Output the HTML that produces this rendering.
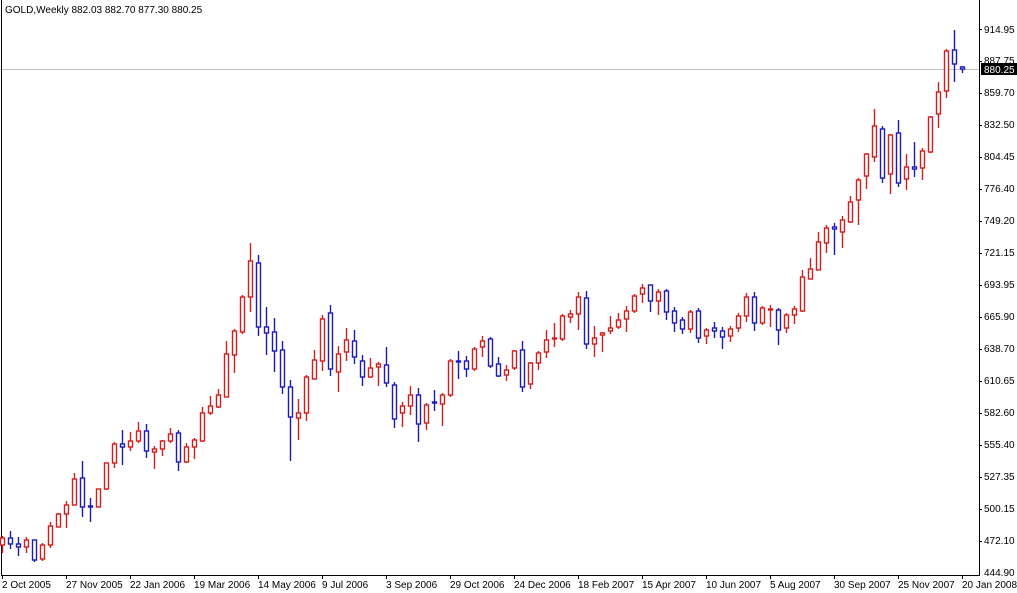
<!DOCTYPE html>
<html><head><meta charset="utf-8"><style>
html,body{margin:0;padding:0;background:#fff;width:1017px;height:593px;overflow:hidden}
svg{display:block}
text{font-family:"Liberation Sans",sans-serif;font-size:10px;fill:#000}
</style></head><body>
<svg width="1017" height="593" viewBox="0 0 1017 593" xmlns="http://www.w3.org/2000/svg">
<rect x="0" y="0" width="1017" height="593" fill="#fff"/>
<path d="M0 69.5H979" stroke="#c0c0c0" stroke-width="1"/>
<path d="M1.5 0V575.5H979.5V0" fill="none" stroke="#000" stroke-width="1"/>
<text x="5" y="13">GOLD,Weekly  882.03 882.70 877.30 880.25</text>

<g stroke="#d41c1c" stroke-width="1.4" fill="#fff">
<path d="M2.5 536V553M26.5 537V553M42.5 543V561M50.5 522V548M58.5 513V527M66.5 501V528M74.5 473V505M98.5 489V507M106.5 463V490M114.5 442V468M130.5 432V451M138.5 422V443M154.5 446V469M162.5 440V456M170.5 428V443M186.5 443V463M194.5 438V459M202.5 407V442M210.5 396V415M218.5 389V408M226.5 341V397M234.5 329V373M242.5 295V334M250.5 243V312M298.5 399V440M306.5 375V421M314.5 350V379M322.5 315V371M338.5 346V392M346.5 328V361M370.5 358V378M378.5 362V386M402.5 402V427M410.5 386V415M426.5 403V430M442.5 393V426M450.5 359V397M474.5 347V371M482.5 336V357M506.5 365V381M514.5 350V370M530.5 362V389M538.5 351V370M546.5 330V358M554.5 323V347M562.5 314V341M570.5 310V323M578.5 292V330M594.5 326V357M602.5 332V352M610.5 316V334M618.5 313V329M626.5 306V332M634.5 294V313M642.5 284V303M658.5 289V315M690.5 310V333M706.5 328V344M730.5 326V342M738.5 313V332M746.5 293V322M762.5 306V325M770.5 305V327M786.5 313V333M794.5 306V324M802.5 270V312M810.5 258V279M818.5 232V270M826.5 225V253M842.5 216V248M850.5 196V223M858.5 178V225M866.5 153V189M874.5 109V162M890.5 134V194M906.5 154V190M922.5 148V180M930.5 116V153M938.5 82V128M946.5 49V98"/>
<rect x="0.5" y="538" width="4" height="7"/><rect x="24.5" y="540" width="4" height="7"/><rect x="40.5" y="545" width="4" height="14"/><rect x="48.5" y="526" width="4" height="19"/><rect x="56.5" y="514" width="4" height="13"/><rect x="64.5" y="505" width="4" height="9"/><rect x="72.5" y="479" width="4" height="26"/><rect x="96.5" y="489" width="4" height="18"/><rect x="104.5" y="463" width="4" height="26"/><rect x="112.5" y="444" width="4" height="19"/><rect x="128.5" y="441" width="4" height="6"/><rect x="136.5" y="431" width="4" height="10"/><rect x="152.5" y="449" width="4" height="3"/><rect x="160.5" y="441" width="4" height="8"/><rect x="168.5" y="434" width="4" height="7"/><rect x="184.5" y="447" width="4" height="15"/><rect x="192.5" y="440" width="4" height="7"/><rect x="200.5" y="413" width="4" height="28"/><rect x="208.5" y="406" width="4" height="7"/><rect x="216.5" y="395" width="4" height="12"/><rect x="224.5" y="354" width="4" height="43"/><rect x="232.5" y="331" width="4" height="24"/><rect x="240.5" y="297" width="4" height="35"/><rect x="248.5" y="261" width="4" height="36"/><rect x="296.5" y="413" width="4" height="5"/><rect x="304.5" y="377" width="4" height="36"/><rect x="312.5" y="360" width="4" height="19"/><rect x="320.5" y="319" width="4" height="42"/><rect x="336.5" y="354" width="4" height="18"/><rect x="344.5" y="340" width="4" height="12"/><rect x="368.5" y="368" width="4" height="9"/><rect x="376.5" y="364" width="4" height="3"/><rect x="400.5" y="406" width="4" height="7"/><rect x="408.5" y="395" width="4" height="11"/><rect x="424.5" y="405" width="4" height="18"/><rect x="440.5" y="395" width="4" height="9"/><rect x="448.5" y="361" width="4" height="34"/><rect x="472.5" y="349" width="4" height="20"/><rect x="480.5" y="341" width="4" height="6"/><rect x="504.5" y="370" width="4" height="5"/><rect x="512.5" y="351" width="4" height="17"/><rect x="528.5" y="363" width="4" height="21"/><rect x="536.5" y="353" width="4" height="10"/><rect x="544.5" y="340" width="4" height="12"/><rect x="552.5" y="338" width="4" height="1"/><rect x="560.5" y="316" width="4" height="23"/><rect x="568.5" y="314" width="4" height="3"/><rect x="576.5" y="297" width="4" height="17"/><rect x="592.5" y="338" width="4" height="6"/><rect x="600.5" y="333" width="4" height="2"/><rect x="608.5" y="328" width="4" height="3"/><rect x="616.5" y="320" width="4" height="7"/><rect x="624.5" y="311" width="4" height="8"/><rect x="632.5" y="296" width="4" height="15"/><rect x="640.5" y="288" width="4" height="6"/><rect x="656.5" y="292" width="4" height="9"/><rect x="688.5" y="312" width="4" height="17"/><rect x="704.5" y="330" width="4" height="6"/><rect x="728.5" y="329" width="4" height="7"/><rect x="736.5" y="316" width="4" height="12"/><rect x="744.5" y="297" width="4" height="19"/><rect x="760.5" y="308" width="4" height="15"/><rect x="768.5" y="309" width="4" height="1"/><rect x="784.5" y="315" width="4" height="13"/><rect x="792.5" y="309" width="4" height="6"/><rect x="800.5" y="277" width="4" height="34"/><rect x="808.5" y="269" width="4" height="10"/><rect x="816.5" y="242" width="4" height="28"/><rect x="824.5" y="228" width="4" height="15"/><rect x="840.5" y="220" width="4" height="12"/><rect x="848.5" y="202" width="4" height="20"/><rect x="856.5" y="180" width="4" height="20"/><rect x="864.5" y="154" width="4" height="22"/><rect x="872.5" y="126" width="4" height="31"/><rect x="888.5" y="135" width="4" height="39"/><rect x="904.5" y="167" width="4" height="12"/><rect x="920.5" y="151" width="4" height="17"/><rect x="928.5" y="117" width="4" height="35"/><rect x="936.5" y="92" width="4" height="22"/><rect x="944.5" y="51" width="4" height="40"/>
</g>

<g stroke="#1a1ac0" stroke-width="1.4" fill="#fff">
<path d="M10.5 531V549M18.5 537V556M34.5 540V562M82.5 461V517M90.5 498V522M122.5 430V465M146.5 424V458M178.5 430V471M258.5 255V336M266.5 307V355M274.5 318V372M282.5 341V394M290.5 380V461M330.5 305V376M354.5 330V364M362.5 355V386M386.5 347V387M394.5 382V428M418.5 388V442M434.5 390V411M458.5 351V379M466.5 356V377M490.5 337V368M498.5 357V377M522.5 341V392M586.5 291V349M650.5 285V312M666.5 289V320M674.5 307V332M682.5 317V334M698.5 308V343M714.5 322V338M722.5 327V349M754.5 292V331M778.5 308V345M834.5 223V255M882.5 126V183M898.5 120V187M914.5 142V177M954.5 30V82M962.5 66V73"/>
<rect x="8.5" y="538" width="4" height="6"/><rect x="16.5" y="544" width="4" height="3"/><rect x="32.5" y="540" width="4" height="20"/><rect x="80.5" y="478" width="4" height="29"/><rect x="88.5" y="506" width="4" height="1"/><rect x="120.5" y="444" width="4" height="3"/><rect x="144.5" y="431" width="4" height="20"/><rect x="176.5" y="433" width="4" height="29"/><rect x="256.5" y="263" width="4" height="64"/><rect x="264.5" y="327" width="4" height="6"/><rect x="272.5" y="332" width="4" height="19"/><rect x="280.5" y="350" width="4" height="37"/><rect x="288.5" y="387" width="4" height="30"/><rect x="328.5" y="313" width="4" height="56"/><rect x="352.5" y="341" width="4" height="16"/><rect x="360.5" y="361" width="4" height="16"/><rect x="384.5" y="365" width="4" height="18"/><rect x="392.5" y="385" width="4" height="34"/><rect x="416.5" y="395" width="4" height="29"/><rect x="432.5" y="402" width="4" height="1"/><rect x="456.5" y="361" width="4" height="1"/><rect x="464.5" y="361" width="4" height="8"/><rect x="488.5" y="339" width="4" height="27"/><rect x="496.5" y="364" width="4" height="12"/><rect x="520.5" y="350" width="4" height="37"/><rect x="584.5" y="298" width="4" height="46"/><rect x="648.5" y="285" width="4" height="16"/><rect x="664.5" y="291" width="4" height="21"/><rect x="672.5" y="311" width="4" height="12"/><rect x="680.5" y="320" width="4" height="9"/><rect x="696.5" y="311" width="4" height="27"/><rect x="712.5" y="328" width="4" height="3"/><rect x="720.5" y="331" width="4" height="6"/><rect x="752.5" y="297" width="4" height="26"/><rect x="776.5" y="310" width="4" height="20"/><rect x="832.5" y="227" width="4" height="2"/><rect x="880.5" y="129" width="4" height="49"/><rect x="896.5" y="133" width="4" height="50"/><rect x="912.5" y="167" width="4" height="2"/><rect x="952.5" y="50" width="4" height="14"/><rect x="960.5" y="67" width="4" height="2"/>
</g>

<g stroke="#000" stroke-width="1">
<path d="M979 29.5h3M979 61.5h3M979 93.5h3M979 125.5h3M979 157.5h3M979 189.5h3M979 221.5h3M979 253.5h3M979 285.5h3M979 317.5h3M979 349.5h3M979 381.5h3M979 413.5h3M979 445.5h3M979 477.5h3M979 509.5h3M979 541.5h3"/>
<path d="M2.5 575v4M66.5 575v4M130.5 575v4M194.5 575v4M258.5 575v4M322.5 575v4M386.5 575v4M450.5 575v4M514.5 575v4M578.5 575v4M642.5 575v4M706.5 575v4M770.5 575v4M834.5 575v4M898.5 575v4M962.5 575v4"/>
</g>
<g>
<text x="984" y="33">914.95</text>
<text x="984" y="64">887.75</text>
<text x="984" y="96">859.70</text>
<text x="984" y="128">832.50</text>
<text x="984" y="160">804.45</text>
<text x="984" y="192">776.40</text>
<text x="984" y="224">749.20</text>
<text x="984" y="256">721.15</text>
<text x="984" y="288">693.95</text>
<text x="984" y="320">665.90</text>
<text x="984" y="352">638.70</text>
<text x="984" y="384">610.65</text>
<text x="984" y="416">582.60</text>
<text x="984" y="448">555.40</text>
<text x="984" y="480">527.35</text>
<text x="984" y="512">500.15</text>
<text x="984" y="544">472.10</text>
<text x="984" y="576">444.90</text>
</g>
<rect x="981" y="63" width="36" height="12" fill="#000"/>
<text x="984" y="73" style="fill:#fff">880.25</text>
<g>
<text x="2" y="588">2 Oct 2005</text>
<text x="66" y="588">27 Nov 2005</text>
<text x="130" y="588">22 Jan 2006</text>
<text x="194" y="588">19 Mar 2006</text>
<text x="258" y="588">14 May 2006</text>
<text x="322" y="588">9 Jul 2006</text>
<text x="386" y="588">3 Sep 2006</text>
<text x="450" y="588">29 Oct 2006</text>
<text x="514" y="588">24 Dec 2006</text>
<text x="578" y="588">18 Feb 2007</text>
<text x="642" y="588">15 Apr 2007</text>
<text x="706" y="588">10 Jun 2007</text>
<text x="770" y="588">5 Aug 2007</text>
<text x="834" y="588">30 Sep 2007</text>
<text x="898" y="588">25 Nov 2007</text>
<text x="962" y="588">20 Jan 2008</text>
</g>
</svg>
</body></html>
